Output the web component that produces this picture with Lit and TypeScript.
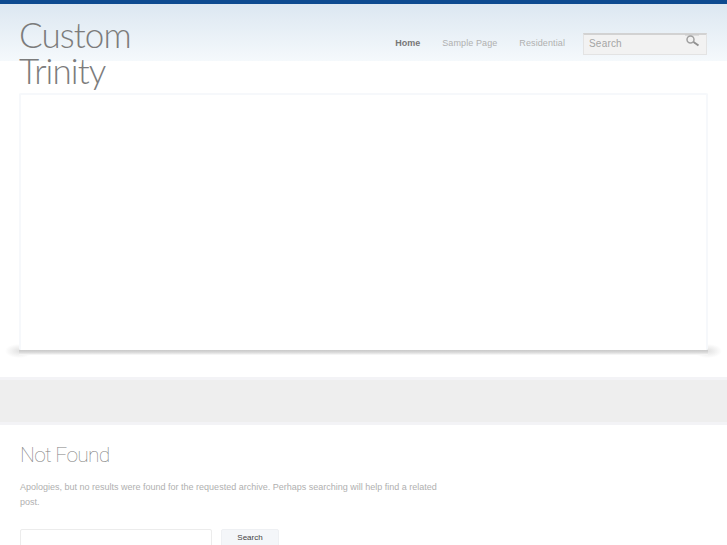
import { LitElement, html, css } from "lit";
import { customElement } from "lit/decorators.js";

@customElement("app-root")
export class AppRoot extends LitElement {
  static styles = css`
    :host { display: block; height: 545px; overflow: hidden; background: #fff; font-family: "Liberation Sans", Arial, sans-serif; font-size: 9px; color: #aaa; }
    .top { height: 4px; background: #0d4a90; }
    .head {
      display: flex; justify-content: space-between; align-items: flex-start;
      padding: 0 20px 0 19px; height: 89px; box-sizing: border-box;
      background: linear-gradient(#dce7f1, #f5f9fc) no-repeat;
      background-size: 100% 57px;
    }
    .logo { font-family: Lato, sans-serif; font-weight: 300; font-size: 35px; letter-spacing: -0.9px; line-height: 36px; color: #7c7c7c; margin-top: 12px; width: 140px; }
    .nav { display: flex; align-items: center; margin-top: 29px; }
    .nav a { margin: 0 22px 2px 0; letter-spacing: 0.1px; color: #b0b0b0; }
    .nav a.on { font-weight: 700; color: #777; letter-spacing: 0; }
    .search { width: 124px; height: 22px; box-sizing: border-box; margin: 0 0 0 -4px; background: #f2f2f2; border: 1px solid #e3e3e3; border-top: 2px solid #d2d2d2; display: flex; justify-content: space-between; align-items: center; padding: 0 6px 2px 5px; color: #a5a5a5; font-size: 10px; letter-spacing: 0.2px; }
    .search svg { display: block; margin-top: -5px; }
    .frame-wrap { position: relative; margin: 0 19px; }
    .frame { height: 257px; box-sizing: border-box; background: #fff; border: 2px solid #f6f8fb; border-bottom: none; border-radius: 2px; position: relative; z-index: 1; }
    .shadow { position: absolute; left: 0; right: 0; bottom: -5px; height: 5px; background: linear-gradient(#c9c9c9, #d6d6d6 40%, #f0f0f0 85%, #fff); }
    .blob { position: absolute; bottom: -8px; width: 28px; height: 14px; background: radial-gradient(closest-side, #e2e2e2, rgba(255,255,255,0)); }
    .blob.l { left: -14px; }
    .blob.r { right: -14px; }
    .band { height: 48px; margin-top: 27px; box-sizing: border-box; background: #eeeeee; border-top: 3px solid #f3f3f6; border-bottom: 3px solid #f3f3f6; }
    .main { padding: 0 20px; }
    h1 { font-family: Roboto, sans-serif; font-weight: 100; font-size: 21px; letter-spacing: -0.7px; line-height: 28px; color: #808080; margin: 16px 0 0; }
    p { margin: 11px 0 0; width: 420px; line-height: 15px; color: #b0b0b0; }
    .form { display: flex; gap: 9px; margin-top: 19px; }
    .input { width: 192px; height: 24px; box-sizing: border-box; border: 1px solid #ececec; background: #fff; border-radius: 2px; }
    .btn { width: 58px; height: 24px; box-sizing: border-box; border: 1px solid #eef0f3; background: #f4f6f9; color: #444; font-size: 8px; text-align: center; line-height: 15px; border-radius: 2px; }
  `;
  render() {
    return html`
      <div class="top"></div>
      <div class="head">
        <div class="logo">Custom Trinity</div>
        <div class="nav">
          <a class="on">Home</a><a>Sample Page</a><a>Residential</a>
          <div class="search">
            <span>Search</span>
            <svg width="16" height="14" viewBox="0 0 16 14" fill="none" stroke="#a0a0a0">
              <path d="M1 1h14" stroke="#c8c8c8"/>
              <circle cx="6.5" cy="5.5" r="3.5" stroke-width="1.5"/>
              <path d="M9.5 8l5 3.5" stroke-width="2" stroke="#909090"/>
            </svg>
          </div>
        </div>
      </div>
      <div class="frame-wrap">
        <div class="blob l"></div><div class="blob r"></div>
        <div class="shadow"></div><div class="frame"></div>
      </div>
      <div class="band"></div>
      <div class="main">
        <h1>Not Found</h1>
        <p>Apologies, but no results were found for the requested archive. Perhaps searching will help find a related post.</p>
        <div class="form"><div class="input"></div><div class="btn">Search</div></div>
      </div>
    `;
  }
}
